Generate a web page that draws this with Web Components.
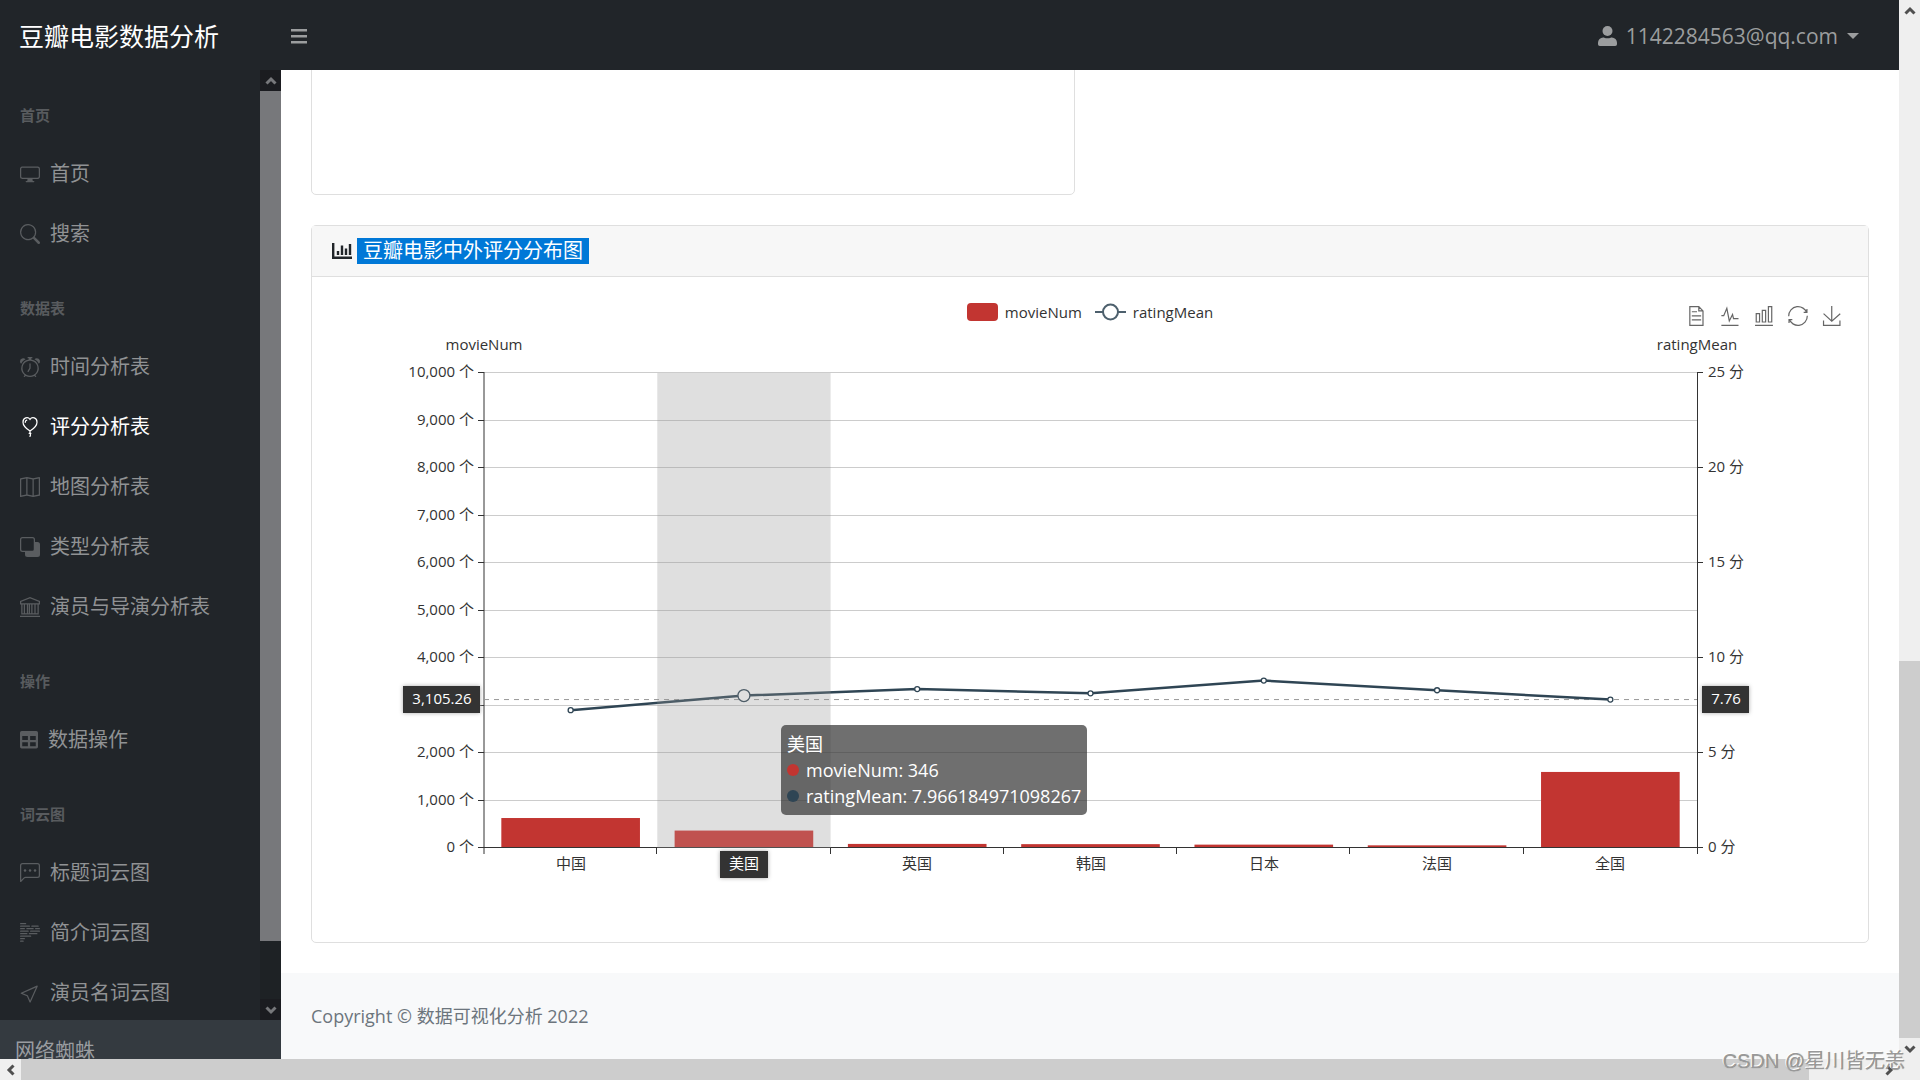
<!DOCTYPE html>
<html lang="zh-CN">
<head>
<meta charset="utf-8">
<title>豆瓣电影数据分析</title>
<style>
  html, body { margin: 0; height: 100%; }
  body { overflow: hidden; font: 20px/30px "Open Sans", "Noto Sans CJK SC", sans-serif; color: #212529; background: #fff; }
</style>
</head>
<body>
<movie-dashboard>
  <top-bar slot="top"></top-bar>
  <side-nav slot="side"></side-nav>
  <panel-card slot="upper" plain></panel-card>
  <panel-card slot="lower">
    <span slot="title">豆瓣电影中外评分分布图</span>
    <rating-chart></rating-chart>
  </panel-card>
  <page-footer slot="footer">Copyright © 数据可视化分析 2022</page-footer>
</movie-dashboard>

<script>
const make = (host, html) => {
  const root = host.attachShadow({ mode: 'open' });
  const tpl = document.createElement('template');
  tpl.innerHTML = html;
  root.append(tpl.content.cloneNode(true));
  return root;
};

const icons = {
  display: '<path d="M0 4s0-2 2-2h12s2 0 2 2v6s0 2-2 2h-4c0 .667.083 1.167.25 1.5H11a.5.5 0 0 1 0 1H5a.5.5 0 0 1 0-1h.75c.167-.333.25-.833.25-1.5H2s-2 0-2-2V4zm1.398-.855a.758.758 0 0 0-.254.302A1.46 1.46 0 0 0 1 4.01V10c0 .325.078.502.145.602.07.105.17.188.302.254a1.464 1.464 0 0 0 .538.143L2.01 11H14c.325 0 .502-.078.602-.145a.758.758 0 0 0 .254-.302 1.464 1.464 0 0 0 .143-.538L15 9.99V4c0-.325-.078-.502-.145-.602a.757.757 0 0 0-.302-.254A1.46 1.46 0 0 0 13.99 3H2c-.325 0-.502.078-.602.145z"/>',
  search: '<path d="M11.742 10.344a6.5 6.5 0 1 0-1.397 1.398h-.001c.03.04.062.078.098.115l3.85 3.85a1 1 0 0 0 1.415-1.414l-3.85-3.85a1.007 1.007 0 0 0-.115-.1zM12 6.5a5.5 5.5 0 1 1-11 0 5.5 5.5 0 0 1 11 0z"/>',
  alarm: '<path d="M8.5 5.5a.5.5 0 0 0-1 0v3.362l-1.429 2.38a.5.5 0 1 0 .858.515l1.5-2.5A.5.5 0 0 0 8.5 9V5.5z"/><path d="M6.5 0a.5.5 0 0 0 0 1H7v1.07a7.001 7.001 0 0 0-3.273 12.474l-.602.602a.5.5 0 0 0 .707.708l.746-.746A6.97 6.97 0 0 0 8 16a6.97 6.97 0 0 0 3.422-.892l.746.746a.5.5 0 0 0 .707-.708l-.601-.602A7.001 7.001 0 0 0 9 2.07V1h.5a.5.5 0 0 0 0-1h-3zm1.038 3.018a6.093 6.093 0 0 1 .924 0 6 6 0 1 1-.924 0zM0 3.5c0 .753.333 1.429.86 1.887A8.035 8.035 0 0 1 4.387 1.86 2.5 2.5 0 0 0 0 3.5zM13.5 1c-.753 0-1.429.333-1.887.86a8.035 8.035 0 0 1 3.527 3.527A2.5 2.5 0 0 0 13.5 1z"/>',
  balloon: '<g fill="none" stroke="currentColor" stroke-linecap="round"><path d="M8 11.2C5.200 9.400 2.400 7 2.400 4.100 2.400 0.600 6.300-0.600 8 1.900 9.700-0.600 13.600 0.600 13.600 4.100 13.600 7 10.800 9.400 8 11.200zM8 11.200V12.600M7.300 13h1.400M8 13c.6.900.6 1.600 0 2.500"/><path d="M4.200 4.200c0-1 .4-1.500 1.200-1.700"/></g>',
  map: '<path fill-rule="evenodd" d="M15.817.113A.5.5 0 0 1 16 .5v14a.5.5 0 0 1-.402.49l-5 1a.502.502 0 0 1-.196 0L5.500 15.010l-4.902.980A.5.5 0 0 1 0 15.500v-14a.5.5 0 0 1 .402-.49l5-1a.5.5 0 0 1 .196 0L10.500.990l4.902-.980a.5.5 0 0 1 .415.103zM10 1.910l-4-.8v12.980l4 .8V1.910zm1 12.980 4-.8V1.110l-4 .8v12.980zm-6-.8V1.110l-4 .8v12.980l4-.8z"/>',
  back: '<path fill-rule="evenodd" d="M0 2a2 2 0 0 1 2-2h8a2 2 0 0 1 2 2v2h2a2 2 0 0 1 2 2v8a2 2 0 0 1-2 2H6a2 2 0 0 1-2-2v-2H2a2 2 0 0 1-2-2V2zm2-1a1 1 0 0 0-1 1v8a1 1 0 0 0 1 1h8a1 1 0 0 0 1-1V2a1 1 0 0 0-1-1H2z"/>',
  bank: '<g fill="none" stroke="currentColor"><path d="M.5 5.500V3.600L8 .6l7.500 3v1.900zM1 13.500h14M0 15.500h16M1.500 5.500v8M3.500 5.500v8M6 5.500v8M7.500 5.500v8M9.500 5.500v8M12 5.500v8M14.500 5.500v8"/></g>',
  table: '<path fill-rule="evenodd" d="M1.500 0h13A1.500 1.500 0 0 1 16 1.500v12.500a1.500 1.500 0 0 1-1.500 1.500h-13A1.500 1.500 0 0 1 0 14V1.500A1.500 1.500 0 0 1 1.500 0zM2 4.500v3.500h5V4.500zM9 4.500v3.500h5V4.500zM2 10v3.500h5V10zM9 10v3.500h5V10z"/>',
  chat: '<path d="M14 1a1 1 0 0 1 1 1v8a1 1 0 0 1-1 1H4.414A2 2 0 0 0 3 11.586l-2 2V2a1 1 0 0 1 1-1h12zM2 0a2 2 0 0 0-2 2v12.793a.5.5 0 0 0 .854.353l2.853-2.853A1 1 0 0 1 4.414 12H14a2 2 0 0 0 2-2V2a2 2 0 0 0-2-2H2z"/><circle cx="4" cy="6" r="1"/><circle cx="8" cy="6" r="1"/><circle cx="12" cy="6" r="1"/>',
  body: '<path fill="none" stroke="currentColor" stroke-linecap="round" d="M.5.5h4M.5 2.500h7M9.500 2.500h5M.5 4.500h3M5.500 4.500h5M12.500 4.500h3M.5 6.500h6M8.500 6.500h7M.5 8.500h5M7.500 8.500h6M.5 10.500h8M.5 12.500h3M.5 14.500h2"/>',
  cursor: '<path d="M14.082 2.182a.5.5 0 0 1 .103.557L8.528 15.467a.5.5 0 0 1-.917-.007L5.570 10.694.803 8.652a.5.5 0 0 1-.006-.916l12.728-5.657a.5.5 0 0 1 .556.103zM2.250 8.184l3.897 1.670a.5.5 0 0 1 .262.263l1.670 3.897L12.743 3.520 2.250 8.184z"/>'
};

/* Scrollbar: arrow, track with thumb, arrow. */
customElements.define('scroll-strip', class extends HTMLElement {
  connectedCallback() {
    const [before, thumb, after] = this.getAttribute('parts').split(' ');
    make(this, `<style>
      :host { display: flex; flex-direction: column; width: 21px; background: var(--track, #efefef); color: var(--arrow, #505050); }
      :host([horizontal]) { flex-direction: row; width: auto; height: 21px; }
      .end { flex: none; width: 21px; height: 21px; display: grid; place-items: center; background: var(--end, transparent); }
      .track { flex: 1; display: flex; flex-direction: inherit; min-width: 0; min-height: 0; }
      .thumb { flex: ${thumb}; background: var(--thumb, #cdcdcd); }
      svg { fill: none; stroke: currentColor; stroke-width: 3; }
      :host([horizontal]) svg { transform: rotate(-90deg); }
    </style>
    <div class="end"><svg width="12" height="12" viewBox="0 0 12 12"><path d="M1.500 8.500 6 4l4.500 4.500"/></svg></div>
    <div class="track"><div style="flex:${before}"></div><div class="thumb"></div><div style="flex:${after}"></div></div>
    <div class="end"><svg width="12" height="12" viewBox="0 0 12 12"><path d="M1.500 3.500 6 8l4.500-4.500"/></svg></div>`);
  }
});

customElements.define('top-bar', class extends HTMLElement {
  connectedCallback() {
    make(this, `<style>
      :host { display: flex; align-items: center; height: 70px; background: #212529; color: #9b9d9e; }
      .brand { width: 261px; padding: 2px 0 0 19px; margin-right: 1px; font-size: 25px; line-height: 38px; color: #fff; text-decoration: none; }
      button { font: inherit; color: inherit; background: none; border: 0; padding: 0; display: flex; align-items: center; }
      .toggle { padding: 12px 10px 10px; margin-right: auto; }
      .account { font-size: 21px; gap: 9px; padding: 1px 40px 0 0; }
      .caret { border: 6px solid transparent; border-top-color: currentColor; border-bottom: 0; }
      svg { fill: currentColor; }
    </style>
    <a class="brand" href="#">豆瓣电影数据分析</a>
    <button class="toggle" aria-label="菜单"><svg width="16" height="16" viewBox="0 0 16 16"><path d="M0 1h16v2.400H0zM0 7h16v2.400H0zM0 13h16v2.400H0z"/></svg></button>
    <button class="account">
      <svg width="19" height="20" viewBox="0 0 19 20"><circle cx="9.500" cy="5" r="5"/><path d="M0 18.200v-1.500a5.200 5.200 0 0 1 5.200-5.200c1 0 2 .8 4.300.8s3.300-.8 4.300-.8a5.200 5.200 0 0 1 5.200 5.200v1.500a1.800 1.800 0 0 1-1.800 1.800H1.800A1.800 1.800 0 0 1 0 18.200z"/></svg>
      <span>1142284563@qq.com</span><i class="caret"></i>
    </button>`);
  }
});

customElements.define('nav-item', class extends HTMLElement {
  connectedCallback() {
    const name = this.getAttribute('icon');
    make(this, `<style>
      :host { display: block; color: #909294; --icon: #5a5d60; }
      :host([active]) { color: #fff; --icon: #fff; }
      a { display: flex; align-items: center; gap: 10px; padding: 16px 20px 14px; line-height: 30px; color: inherit; text-decoration: none; }
      svg { color: var(--icon); fill: currentColor; overflow: visible; }
    </style>
    <a href="#"><svg width="${name === 'table' ? 18 : 20}" height="20" viewBox="0 0 16 16">${icons[name]}</svg><slot></slot></a>`);
  }
});

customElements.define('side-nav', class extends HTMLElement {
  connectedCallback() {
    make(this, `<style>
      :host { display: flex; flex-direction: column; background: #212529; overflow: hidden; }
      .scroller { flex: 1; min-height: 0; display: flex; }
      nav { flex: 1; overflow: hidden; }
      h2 { margin: 0; padding: 34px 20px 16px; font-size: 15px; line-height: 23px; font-weight: 700; color: #585b5e; }
      scroll-strip { --track: #1e2225; --thumb: #77787b; --end: #1b1c20; --arrow: #77787b; }
      footer { height: 39px; overflow: hidden; box-sizing: border-box; padding: 16px 15px 0; background: #343a40; color: #9a9da0; }
    </style>
    <div class="scroller">
      <nav>
        <h2>首页</h2>
        <nav-item icon="display">首页</nav-item>
        <nav-item icon="search">搜索</nav-item>
        <h2>数据表</h2>
        <nav-item icon="alarm">时间分析表</nav-item>
        <nav-item icon="balloon" active>评分分析表</nav-item>
        <nav-item icon="map">地图分析表</nav-item>
        <nav-item icon="back">类型分析表</nav-item>
        <nav-item icon="bank">演员与导演分析表</nav-item>
        <h2>操作</h2>
        <nav-item icon="table">数据操作</nav-item>
        <h2>词云图</h2>
        <nav-item icon="chat">标题词云图</nav-item>
        <nav-item icon="body">简介词云图</nav-item>
        <nav-item icon="cursor">演员名词云图</nav-item>
      </nav>
      <scroll-strip parts="0 850 58"></scroll-strip>
    </div>
    <footer>网络蜘蛛</footer>`);
  }
});

customElements.define('panel-card', class extends HTMLElement {
  connectedCallback() {
    make(this, `<style>
      :host { display: block; border: 1px solid #dfdfdf; border-radius: 5px; background: #fff; min-width: 0; }
      :host([plain]) header { display: none; }
      :host([plain]) { min-height: 400px; }
      header { display: flex; align-items: center; gap: 5px; padding: 12px 20px; background: #f7f7f7; border-bottom: 1px solid #dfdfdf; }
      .mark { padding: 0 6px; line-height: 26px; background: #0078d7; color: #fff; }
      .body { padding: 20px; }
    </style>
    <header>
      <svg width="20" height="16" viewBox="0 0 20 16" fill="none" stroke="currentColor" stroke-width="2.400"><path d="M1.200 0v14.800H20M6 12V8M10 12V2.500M14 12V5.500M18 12V1"/></svg>
      <span class="mark"><slot name="title"></slot></span>
    </header>
    <div class="body"><slot></slot></div>`);
  }
});

customElements.define('rating-chart', class extends HTMLElement {
  connectedCallback() {
    const tool = (label, d) => `<button aria-label="${label}"><svg width="20" height="20" viewBox="0 0 60 60" fill="none" stroke="#666" stroke-width="3.600"><path d="${d}"/></svg></button>`;
    this.root = make(this, `<style>
      :host { display: block; position: relative; font-size: 15px; line-height: 20px; color: #333; }
      .head { display: grid; grid-template-columns: 1fr auto 1fr; height: 38px; }
      .legend { grid-column: 2; display: flex; gap: 13px; height: 29px; }
      .tools { display: flex; justify-content: flex-end; align-items: center; gap: 14px; padding-right: 6px; }
      button { display: flex; align-items: center; gap: 7px; font: inherit; color: inherit; background: none; border: 0; padding: 0; }
      svg { display: block; overflow: visible; }
      #plot { width: 100%; height: 587px; }
      #plot text { fill: #333; dominant-baseline: central; }
      #plot text.on { fill: #fff; }
      .tip { position: absolute; padding: 6px; border-radius: 5px; background: rgba(50,50,50,.7); color: #fff; font-size: 18px; line-height: 26px; white-space: nowrap; }
      .tip div { display: flex; align-items: center; gap: 7px; }
      .tip i { width: 12px; height: 12px; border-radius: 50%; }
    </style>
    <div class="head">
      <div class="legend">
        <button><svg width="31" height="18"><rect width="31" height="18" rx="4" fill="#c23531"/></svg>movieNum</button>
        <button><svg width="31" height="18" fill="#fff" stroke="#2f4554" stroke-width="2" opacity=".85"><path d="M0 9h31"/><circle cx="15.500" cy="9" r="7.500"/></svg>ratingMean</button>
      </div>
      <div class="tools">
        ${tool('数据视图', 'M17.500,17.300H33M45.400,29.500h-28M11.500,2v56H51V14.800L38.400,2H11.500zM38.400,2.200v12.700H51M45.400,41.700h-28')}
        ${tool('切换为折线图', 'M4.100,28.900h7.100l9.300-22l7.400,38l9.700-19.700l3,12.800h14.900M4.100,58h51.400')}
        ${tool('切换为柱状图', 'M6.700,22.900h10V48h-10V22.900zM24.900,13h10v35h-10V13zM43.200,2h10v46h-10V2zM3.100,58h53.700')}
        ${tool('还原', 'M47,18.900h9.800V8.700M56.300,20.100C52.100,9,40.500,0.600,26.800,2.100C12.600,3.700,1.600,16.200,2.100,30.600M13,41.100H3.100v10.200M3.700,39.900c4.200,11.100,15.800,19.500,29.500,18c14.200-1.600,25.200-14.100,24.700-28.500')}
        ${tool('保存为图片', 'M4.700,22.900L29.300,45.500L54.700,23.400M4.600,43.600L4.600,58L53.800,58L53.800,43.600M29.200,45.100L29.200,0')}
      </div>
    </div>
    <svg id="plot"></svg>
    <div class="tip">美国<div><i style="background:#c23531"></i>movieNum: 346</div><div><i style="background:#2f4554"></i>ratingMean: 7.966184971098267</div></div>`);
    this.draw();
    new ResizeObserver(() => this.draw()).observe(this);
  }
  draw() {
    const names = ['中国', '美国', '英国', '韩国', '日本', '法国', '全国'];
    const counts = [610, 346, 65, 60, 50, 35, 1580];
    const ratings = [7.2, 7.97, 8.31, 8.09, 8.76, 8.25, 7.76];
    const W = this.clientWidth, L = Math.round(W * .1), R = W - L + 1, T = 38, H = 475, B = T + H;
    const step = (R - L) / names.length, cx = i => L + step * (i + .5);
    const yCount = v => B - 1 - v / 10000 * H, yRate = v => B - 1 - v / 25 * H;
    const text = (x, y, s, a, c = '') => `<text x="${Math.round(x)}" y="${Math.round(y)}" text-anchor="${a}" class="${c}">${s}</text>`;
    const badge = (x, y, w, s) => `<rect x="${Math.round(x)}" y="${Math.round(y)}" width="${w}" height="27" fill="#333" style="filter:drop-shadow(0 0 2px #aaa)"/>` + text(x + w / 2, y + 12, s, 'middle', 'on');
    const line = (x1, y1, x2, y2, c, extra = '') => `<path d="M${x1} ${y1}L${x2} ${y2}" stroke="${c}" ${extra}/>`;
    let s = text(L, 9, 'movieNum', 'middle') + text(R, 9, 'ratingMean', 'middle');
    for (let i = 0; i <= 10; i++) {
      const y = Math.round(B - i * H / 10) - .5;
      s += line(L, y, R, y, '#ccc') + line(L - 6, y, L, y, '#333');
      if (i !== 3) s += text(L - 10, y - 1.5, (i * 1000).toLocaleString('en-US') + ' 个', 'end');
      if (i % 2 === 0) s += line(R, y, R + 6, y, '#333') + text(R + 11, y - 1.5, i * 2.5 + ' 分', 'start');
    }
    names.forEach((n, i) => {
      s += `<rect x="${cx(i) - step * .4}" y="${yCount(counts[i])}" width="${step * .8}" height="${B - yCount(counts[i])}" fill="${i === 1 ? '#d33631' : '#c23531'}"/>`;
      const x = Math.round(L + step * (i + 1)) - .5;
      if (i < 6) s += line(x, B, x, B + 6, '#333');
      if (i !== 1) s += text(cx(i), B + 15, n, 'middle');
    });
    s += line(L - 6, B - .5, R, B - .5, '#333') + line(L, T - 1, L, B + 6, '#333') + line(R + .5, T - 1, R + .5, B + 6, '#333');
    s += line(L, yRate(7.76), R, yRate(7.76), '#999', 'stroke-dasharray="5 5"');
    s += `<path d="M${ratings.map((v, i) => cx(i) + ' ' + yRate(v)).join('L')}" fill="none" stroke="#2f4554" stroke-width="2.500"/>`;
    ratings.forEach((v, i) => s += `<circle cx="${cx(i)}" cy="${yRate(v)}" r="${i === 1 ? 6 : 2.5}" fill="#fff" stroke="#2f4554" stroke-width="1.300"/>`);
    s += `<rect x="${L + step}" y="${T}" width="${step}" height="${H}" fill="rgba(150,150,150,.3)"/>`;
    s += badge(L - 81, yRate(7.76) - 14, 77, '3,105.26') + badge(R + 5, yRate(7.76) - 14, 47, '7.76') + badge(cx(1) - 24, B + 3, 48, '美国');
    this.root.getElementById('plot').innerHTML = s;
    const tip = this.root.querySelector('.tip');
    tip.style.left = Math.round(cx(1) + 37) + 'px';
    tip.style.top = Math.round(38 + yRate(7.76) + 25) + 'px';
  }
});

customElements.define('page-footer', class extends HTMLElement {
  connectedCallback() {
    make(this, `<style>
      :host { display: block; padding: 30px; font-size: 18px; line-height: 26px; background: #f8f9fa; color: #6c757d; }
    </style><slot></slot>`);
  }
});

customElements.define('movie-dashboard', class extends HTMLElement {
  connectedCallback() {
    make(this, `<style>
      :host { display: grid; grid-template: minmax(0, 1fr) 21px / minmax(0, 1fr) 21px; height: 100vh; position: relative; overflow: hidden; background: #efefef; }
      .app { display: grid; grid-template: 70px minmax(0, 1fr) / 281px minmax(0, 1fr); background: #fff; }
      slot[name=top]::slotted(*) { grid-column: 1 / -1; }
      .content { display: flex; flex-direction: column; justify-content: flex-end; overflow: hidden; }
      main { display: grid; grid-template-columns: 1fr 1fr; gap: 30px; padding: 30px; }
      slot[name=lower]::slotted(*) { grid-column: 1 / -1; }
      .watermark { position: absolute; right: 15px; bottom: 4px; font: 20px/30px "Liberation Sans", "Noto Sans CJK SC", sans-serif; color: #999; text-shadow: -1px -1px 0 #fff, 0 0 1px #777; }
    </style>
    <div class="app">
      <slot name="top"></slot>
      <slot name="side"></slot>
      <div class="content">
        <main><slot name="upper"></slot><slot name="lower"></slot></main>
        <slot name="footer"></slot>
      </div>
    </div>
    <scroll-strip parts="640 377 0"></scroll-strip>
    <scroll-strip horizontal parts="0 1788 69"></scroll-strip>
    <div class="watermark">CSDN @星川皆无恙</div>`);
  }
});
</script>
</body>
</html>
